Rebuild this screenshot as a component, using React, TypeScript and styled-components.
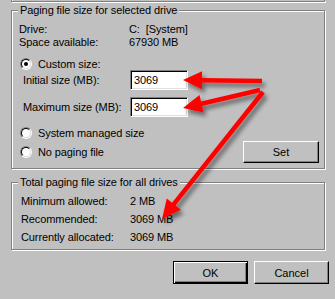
import React from 'react';
import styled, { createGlobalStyle } from 'styled-components';

const GlobalStyle = createGlobalStyle`
  html, body {
    margin: 0;
    padding: 0;
    background: #c0c0c0;
  }
  body {
    font-family: 'Liberation Sans', Arial, sans-serif;
    font-size: 11px;
    letter-spacing: -0.1px;
    color: #000;
  }
`;

type Pt = [number, number];

// red callout arrows drawn over the dialog
const arrows: { from: Pt; to: Pt }[] = [
  { from: [262, 81], to: [183, 80] },
  { from: [260, 90], to: [183, 108] },
  { from: [263, 92], to: [162, 219] },
];

function arrowPoints(from: Pt, to: Pt, shaft = 2.3, headLen = 19, headHalf = 9) {
  const [x1, y1] = from;
  const [x2, y2] = to;
  const len = Math.hypot(x2 - x1, y2 - y1);
  const ux = (x2 - x1) / len;
  const uy = (y2 - y1) / len;
  const nx = -uy;
  const ny = ux;
  const bx = x2 - ux * headLen;
  const by = y2 - uy * headLen;
  const pts: Pt[] = [
    [x1 + nx * shaft, y1 + ny * shaft],
    [bx + nx * shaft, by + ny * shaft],
    [bx + nx * headHalf, by + ny * headHalf],
    [x2, y2],
    [bx - nx * headHalf, by - ny * headHalf],
    [bx - nx * shaft, by - ny * shaft],
    [x1 - nx * shaft, y1 - ny * shaft],
  ];
  return pts.map((p) => p.map((v) => v.toFixed(1)).join(',')).join(' ');
}

function Radio({ checked, label }: { checked?: boolean; label: string }) {
  return (
    <RadioRow>
      <RadioCircle>{checked && <RadioDot />}</RadioCircle>
      <span>{label}</span>
    </RadioRow>
  );
}

export default function App() {
  return (
    <Window>
      <GlobalStyle />
      <PrevGroupTail />

      <Group>
        <Legend>Paging file size for selected drive</Legend>
        <InfoGrid>
          <span>Drive:</span>
          <span>C:&nbsp;&nbsp;[System]</span>
          <span>Space available:</span>
          <span>67930 MB</span>
        </InfoGrid>
        <Radio checked label="Custom size:" />
        <SizeRow>
          <SizeLabel>Initial size (MB):</SizeLabel>
          <SizeInput>3069</SizeInput>
        </SizeRow>
        <SizeRow $gap={7}>
          <SizeLabel>Maximum size (MB):</SizeLabel>
          <SizeInput>3069</SizeInput>
        </SizeRow>
        <RadioStack>
          <Radio label="System managed size" />
          <BottomRow>
            <Radio label="No paging file" />
            <Button>Set</Button>
          </BottomRow>
        </RadioStack>
      </Group>

      <Group $top={13}>
        <Legend>Total paging file size for all drives</Legend>
        <TotalsGrid>
          <span>Minimum allowed:</span>
          <span>2 MB</span>
          <span>Recommended:</span>
          <span>3069 MB</span>
          <span>Currently allocated:</span>
          <span>3069 MB</span>
        </TotalsGrid>
      </Group>

      <Footer>
        <Button $default>OK</Button>
        <Button>Cancel</Button>
      </Footer>

      <Overlay width="335" height="299" viewBox="0 0 335 299">
        <defs>
          <filter id="arrowShadow" x="-20%" y="-20%" width="140%" height="140%">
            <feDropShadow dx="3" dy="4" stdDeviation="2" floodColor="#000" floodOpacity="0.45" />
          </filter>
        </defs>
        <g filter="url(#arrowShadow)">
          {arrows.map((a, i) => (
            <polygon key={i} points={arrowPoints(a.from, a.to)} fill="#ff0000" />
          ))}
        </g>
      </Overlay>
    </Window>
  );
}

const Window = styled.div`
  position: relative;
  width: 335px;
  height: 299px;
  box-sizing: border-box;
  padding: 0 6px 0 11px;
  background: #c0c0c0;
  overflow: hidden;
`;

const PrevGroupTail = styled.div`
  width: 314px;
  height: 2px;
  box-sizing: border-box;
  border: 1px solid #808080;
  border-top: none;
  box-shadow: 1px 1px 0 #fff, inset 1px 0 0 #fff;
`;

const Group = styled.div<{ $top?: number }>`
  position: relative;
  width: 314px;
  box-sizing: border-box;
  margin-top: ${(p) => p.$top ?? 8}px;
  padding: 12px 5px 5px 7px;
  border: 1px solid #808080;
  box-shadow: 1px 1px 0 #fff, inset 1px 1px 0 #fff;
`;

const Legend = styled.div`
  position: absolute;
  top: -7px;
  left: 6px;
  padding: 0 2px;
  line-height: 13px;
  background: #c0c0c0;
  white-space: nowrap;
`;

const InfoGrid = styled.div`
  display: grid;
  grid-template-columns: 110px 1fr;
  line-height: 13px;
`;

const TotalsGrid = styled.div`
  display: grid;
  grid-template-columns: 109px 1fr;
  row-gap: 5px;
  padding: 0 0 0 2px;
  line-height: 13px;
`;

const RadioRow = styled.div`
  display: flex;
  align-items: center;
  gap: 6px;
  height: 13px;
  margin-top: 8px;
  padding-left: 1px;
  white-space: nowrap;
`;

const RadioCircle = styled.span`
  position: relative;
  display: flex;
  align-items: center;
  justify-content: center;
  width: 12px;
  height: 12px;
  box-sizing: border-box;
  border-radius: 50%;
  border: 1px solid;
  border-color: #808080 #fff #fff #808080;
  flex: none;

  &::before {
    content: '';
    position: absolute;
    inset: 0;
    border-radius: 50%;
    border: 1px solid;
    border-color: #000 #dfdfdf #dfdfdf #000;
    background: #fff;
  }
`;

const RadioDot = styled.span`
  position: relative;
  width: 4px;
  height: 4px;
  border-radius: 50%;
  background: #000;
`;

const SizeRow = styled.div<{ $gap?: number }>`
  display: flex;
  align-items: center;
  margin-top: ${(p) => p.$gap ?? 0}px;
  padding-left: 4px;
`;

const SizeLabel = styled.span`
  width: 107px;
  white-space: nowrap;
`;

const SizeInput = styled.div`
  width: 58px;
  height: 20px;
  box-sizing: border-box;
  padding: 0 3px;
  display: flex;
  align-items: center;
  background: #fff;
  border: 1px solid;
  border-color: #808080 #fff #fff #808080;
  box-shadow: inset 1px 1px 0 #000, inset -1px -1px 0 #dfdfdf;
`;

const RadioStack = styled.div`
  margin-top: 9px;

  & > ${RadioRow} {
    margin-top: 0;
  }
`;

const BottomRow = styled.div`
  display: flex;
  align-items: center;
  justify-content: space-between;
  margin-top: 2px;

  ${RadioRow} {
    margin-top: 0;
  }
`;

const Button = styled.button<{ $default?: boolean }>`
  width: ${(p) => (p.$default ? 75 : 76)}px;
  height: ${(p) => (p.$default ? 23 : 22)}px;
  padding: 0;
  font: inherit;
  color: #000;
  background: #c0c0c0;
  border: 1px solid;
  border-color: ${(p) => (p.$default ? '#000' : '#fff #000 #000 #fff')};
  box-shadow: ${(p) =>
    p.$default
      ? 'inset 1px 1px 0 #fff, inset -1px -1px 0 #000, inset -2px -2px 0 #808080'
      : 'inset -1px -1px 0 #808080'};
`;

const Footer = styled.div`
  display: flex;
  justify-content: flex-end;
  gap: 6px;
  margin-top: 11px;

  ${Button} {
    width: 75px;
    height: 23px;
  }
`;

const Overlay = styled.svg`
  position: absolute;
  left: 0;
  top: 0;
  pointer-events: none;
`;
